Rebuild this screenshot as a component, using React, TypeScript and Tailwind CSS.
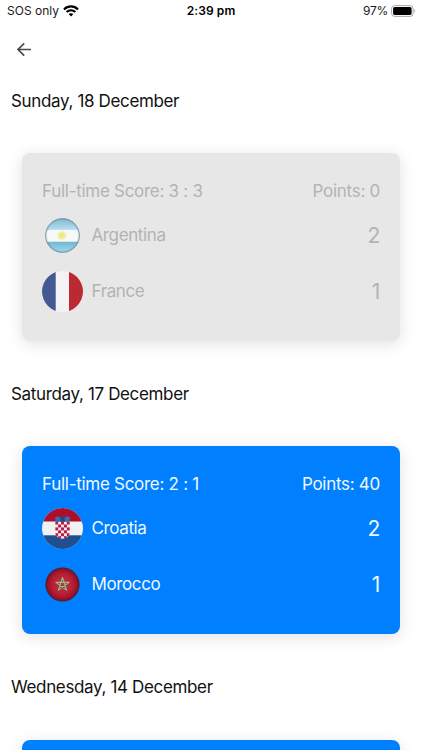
import { ReactNode } from 'react';

interface Team { name: string; goals: number; flag: ReactNode; }
interface Match { date: string; score: string; points: number; settled: boolean; teams: Team[]; }

const ArgentinaFlag = () => (
    <svg viewBox="0 0 36 36" className="size-[35px]">
        <defs>
            <clipPath id="ar-clip"><circle cx="18" cy="18" r="17.5" /></clipPath>
            <linearGradient id="ar-top" x1="0" y1="0" x2="0" y2="1">
                <stop offset="0" stopColor="#83b6cd" />
                <stop offset="1" stopColor="#b4dff2" />
            </linearGradient>
            <linearGradient id="ar-bottom" x1="0" y1="0" x2="0" y2="1">
                <stop offset="0" stopColor="#72b6d1" />
                <stop offset="1" stopColor="#a4dcef" />
            </linearGradient>
            <radialGradient id="ar-sun">
                <stop offset="0.45" stopColor="#eeea88" />
                <stop offset="1" stopColor="#f5f3cd" stopOpacity="0" />
            </radialGradient>
            <radialGradient id="ar-edge">
                <stop offset="0.85" stopColor="#35596a" stopOpacity="0" />
                <stop offset="1" stopColor="#35596a" stopOpacity="0.35" />
            </radialGradient>
        </defs>
        <g clipPath="url(#ar-clip)">
            <rect width="36" height="36" fill="#f8f8f8" />
            <rect width="36" height="12.2" fill="url(#ar-top)" />
            <rect y="24.4" width="36" height="12" fill="url(#ar-bottom)" />
            <circle cx="17.3" cy="18" r="6" fill="url(#ar-sun)" />
            <circle cx="18" cy="18" r="18" fill="url(#ar-edge)" />
        </g>
        <circle cx="18" cy="18" r="17.4" fill="none" stroke="#7895a1" strokeWidth="0.9" />
    </svg>
);

const FranceFlag = () => (
    <svg viewBox="0 0 41 41" className="size-[41px]">
        <clipPath id="fr-clip"><circle cx="20.5" cy="20.5" r="20.5" /></clipPath>
        <g clipPath="url(#fr-clip)">
            <rect width="41" height="41" fill="#f3f3f5" />
            <rect width="13.7" height="41" fill="#445891" />
            <rect x="27" width="14" height="41" fill="#bb2a31" />
        </g>
    </svg>
);

const checks = [0, 1, 2, 3, 4, 5].flatMap(row => [0, 1, 2, 3, 4].filter(col => (row + col) % 2 === 0).map(col => ({ row, col })));

const CroatiaFlag = () => (
    <svg viewBox="0 0 41 41" className="size-[41px]">
        <clipPath id="hr-clip"><circle cx="20.5" cy="20.5" r="20.5" /></clipPath>
        <clipPath id="hr-shield"><path d="M13.2 13h14.6v11.5c0 3.2-3 5.8-7.3 6.3-4.3-.5-7.3-3.1-7.3-6.3z" /></clipPath>
        <g clipPath="url(#hr-clip)">
            <rect width="41" height="41" fill="#f1f1f2" />
            <rect width="41" height="13.5" fill="#aa0f2b" />
            <rect y="27.3" width="41" height="14" fill="#204f91" />
        </g>
        <g clipPath="url(#hr-shield)">
            <rect x="13" y="12" width="15" height="19" fill="#f4e9ed" />
            {checks.map(c => <rect key={`${c.row}-${c.col}`} x={13.2 + c.col * 2.92} y={13.6 + c.row * 2.92} width="2.92" height="2.92" fill="#b9183a" />)}
        </g>
        <path d="M13 9.6l2.5-1.4 2.3 1.4 2.7-1.2 2.7 1.2 2.3-1.4 2.500 1.400-.8 5q-6.700-2-13.400 0z" fill="#3d6cb0" />
        <path d="M18.2 9.500l2.300-1.100 2.300 1.100v4.200h-4.600z" fill="#204b84" />
    </svg>
);

const MoroccoFlag = () => (
    <svg viewBox="0 0 36 36" className="size-[35px]">
        <defs>
            <radialGradient id="ma-base">
                <stop offset="0" stopColor="#c4304a" />
                <stop offset="0.6" stopColor="#bb1d35" />
                <stop offset="0.85" stopColor="#961429" />
                <stop offset="1" stopColor="#4f1830" />
            </radialGradient>
        </defs>
        <circle cx="18" cy="18" r="17.6" fill="url(#ma-base)" />
        <path d="M18 10.8L22.2 23.800 11.200 15.800H24.800L13.800 23.800Z" fill="none" stroke="#6d5540" strokeWidth="2.200" strokeLinejoin="round" />
        <path d="M18 10.800L22.200 23.800 11.200 15.800H24.800L13.800 23.800Z" fill="none" stroke="#b5ad88" strokeWidth="1.100" strokeLinejoin="round" />
    </svg>
);

const matches: Match[] = [
    {
        date: 'Sunday, 18 December', score: '3 : 3', points: 0, settled: false,
        teams: [{ name: 'Argentina', goals: 2, flag: <ArgentinaFlag /> }, { name: 'France', goals: 1, flag: <FranceFlag /> }],
    },
    {
        date: 'Saturday, 17 December', score: '2 : 1', points: 40, settled: true,
        teams: [{ name: 'Croatia', goals: 2, flag: <CroatiaFlag /> }, { name: 'Morocco', goals: 1, flag: <MoroccoFlag /> }],
    },
    { date: 'Wednesday, 14 December', score: '', points: 0, settled: true, teams: [] },
];

function StatusBar() {
    return (
        <div className="grid h-[22px] grid-cols-3 items-center pr-[6px] pl-[7px] text-xs text-[#1a1a1a]">
            <div className="flex items-center gap-[4px]">
                <span>SOS only</span>
                <svg viewBox="0 0 16 12" className="h-[12px] w-[16px]" fill="none" stroke="#000" strokeWidth="2.1">
                    <path d="M1 4.4C5 .4 11 .4 15 4.4" />
                    <path d="M3.6 7.1c2.5-2.4 6.3-2.4 8.8 0" />
                    <path d="M8 11.5L5.6 9.1c1.4-1.2 3.4-1.2 4.8 0z" fill="#000" stroke="none" />
                </svg>
            </div>
            <span className="pr-px text-center font-semibold tracking-[0.1px] text-black">2:39 pm</span>
            <div className="flex items-center justify-end gap-[3px]">
                <span className="tracking-[-0.3px]">97%</span>
                <svg viewBox="0 0 25 12" className="h-[12px] w-[25px]">
                    <rect x="0.6" y="0.6" width="21.5" height="10.8" rx="3" fill="#fff" stroke="#a6a6a6" />
                    <rect x="2.1" y="2.1" width="18.5" height="7.8" rx="1.6" fill="#000" />
                    <path d="M23.3 4.2c1.3.6 1.3 3 0 3.6z" fill="#a6a6a6" />
                </svg>
            </div>
        </div>
    );
}

function MatchCard({ match }: { match: Match }) {
    return (
        <div className={`mx-[22px] h-[188px] rounded-[8px] px-5 pt-[26px] tracking-[-0.28px] shadow-[0_3px_16px_rgba(0,0,0,0.12)] ${match.settled ? 'bg-[#007fff] text-[#f0f8ff]' : 'bg-[#e7e7e7] text-[#b3b3b3]'}`}>
            {match.teams.length > 0 && (
                <div className="flex h-6 items-center justify-between text-[17px] leading-6">
                    <span>Full-time Score: {match.score}</span>
                    <span>Points: {match.points}</span>
                </div>
            )}
            <div className="pt-[4px]">
                {match.teams.map(team => (
                    <div key={team.name} className="flex h-14 items-center">
                        <div className="flex w-[41px] justify-center">{team.flag}</div>
                        <span className="ml-[8.5px] text-[17px] leading-6 tracking-[-0.38px]">{team.name}</span>
                        <span className="ml-auto pt-px text-[21px] leading-[31px]">{team.goals}</span>
                    </div>
                ))}
            </div>
        </div>
    );
}

export default function App() {
    return (
        <div className="h-[750px] w-[422px] overflow-hidden bg-white font-['Inter',sans-serif]">
            <StatusBar />
            <header className="flex h-[66px] items-start px-4 pt-[19px]">
                <svg viewBox="0 0 16 16" className="size-4" fill="none" stroke="#4a4a4a" strokeWidth="1.7">
                    <path d="M15 8.5H2.3M8.2 2.3L2 8.5l6.2 6.2" />
                </svg>
            </header>
            {matches.map(match => (
                <section key={match.date} className="h-[293.3px]">
                    <h2 className="h-[65px] pt-[0.6px] pl-[11px] text-[17px] leading-6 tracking-[-0.35px] text-[#111]">{match.date}</h2>
                    <MatchCard match={match} />
                </section>
            ))}
        </div>
    );
}
